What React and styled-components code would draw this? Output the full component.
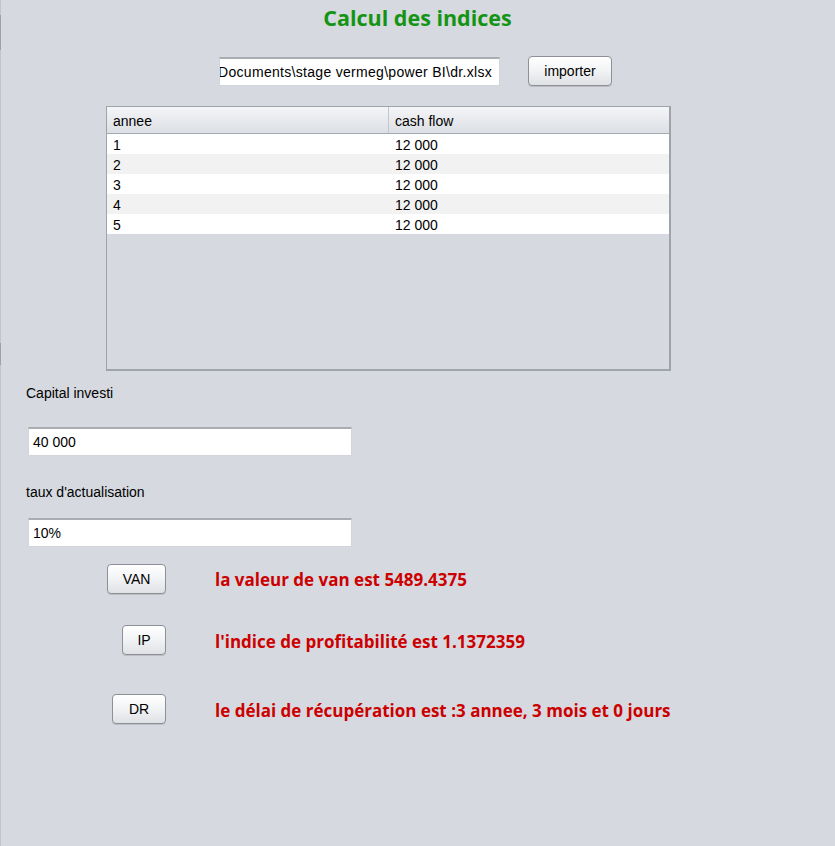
import React from "react";
import styled, { createGlobalStyle } from "styled-components";

const Global = createGlobalStyle`
  html, body { margin: 0; padding: 0; background: #d6d9df; }
  body { font-family: "Liberation Sans", Arial, sans-serif; font-size: 14px; color: #000; }
`;

const Page = styled.div`
  position: relative;
  width: 835px;
  min-height: 846px;
  box-sizing: border-box;
  background: #d6d9df;
  display: flex;
  flex-direction: column;
  &::before, &::after {
    content: "";
    position: absolute;
    left: 0;
    width: 1px;
  }
  &::before { top: 0; bottom: 0; background: #c2c5cb; }
  &::after { top: 15px; height: 35px; background: #9ea1a7; }
`;

const EdgeMark = styled.div`
  position: absolute;
  left: 0;
  top: 343px;
  width: 1px;
  height: 22px;
  background: #9ea1a7;
`;

const Title = styled.h1`
  margin: 4px 0 0 0;
  text-align: center;
  font-family: "Open Sans", "Noto Sans", sans-serif;
  font-weight: 700;
  font-size: 21.5px;
  line-height: 28px;
  color: #149414;
`;

const ImportRow = styled.div`
  display: flex;
  align-items: center;
  gap: 28px;
  margin: 24px 0 0 219px;
`;

const TextField = styled.div`
  box-sizing: border-box;
  width: ${(p) => p.$w}px;
  height: 29px;
  background: #fff;
  border: 1px solid #d2d5da;
  border-top: 2px solid #a9acb1;
  display: flex;
  align-items: center;
  justify-content: ${(p) => (p.$end ? "flex-end" : "flex-start")};
  padding: 0 ${(p) => (p.$end ? 7 : 4)}px 0 4px;
  overflow: hidden;
  white-space: nowrap;
  font-size: 14px;
  letter-spacing: ${(p) => (p.$end ? "0.3px" : "normal")};
`;

const Button = styled.button`
  box-sizing: border-box;
  width: ${(p) => p.$w}px;
  height: 30px;
  border: 1px solid #8d9197;
  border-radius: 4px;
  background: linear-gradient(#ffffff 0%, #f3f4f6 45%, #dfe1e5 100%);
  box-shadow: 0 1px 0 rgba(0,0,0,0.12);
  font-family: "Liberation Sans", Arial, sans-serif;
  font-size: 14px;
  color: #000;
  padding: 0;
  cursor: pointer;
`;

const Table = styled.div`
  box-sizing: border-box;
  margin: 20px 0 0 106px;
  width: 565px;
  height: 265px;
  border: 1px solid #9fa3aa;
  border-right-width: 2px;
  border-bottom-width: 2px;
  display: flex;
  flex-direction: column;
`;

const HeaderRow = styled.div`
  display: grid;
  grid-template-columns: 281px 1fr;
  height: 26px;
  background: linear-gradient(#f4f5f7, #dcdfe4);
  border-bottom: 1px solid #a6aab1;
`;

const HeaderCell = styled.div`
  display: flex;
  align-items: center;
  padding: 2px 0 0 6px;
  font-size: 14px;
  border-left: ${(p) => (p.$sep ? "1px solid #c3c6cc" : "none")};
`;

const Row = styled.div`
  display: grid;
  grid-template-columns: 281px 1fr;
  height: 20px;
  background: ${(p) => (p.$alt ? "#f2f2f2" : "#ffffff")};
`;

const Cell = styled.div`
  display: flex;
  align-items: center;
  padding: 2px 0 0 ${(p) => (p.$second ? 7 : 6)}px;
  font-size: 14px;
`;

const Form = styled.div`
  display: flex;
  flex-direction: column;
  padding-left: 26px;
`;

const Label = styled.div`
  font-size: 14px;
  line-height: 16px;
  margin-top: ${(p) => p.$mt}px;
`;

const FieldWrap = styled.div`
  margin: ${(p) => p.$mt}px 0 0 2px;
`;

const Actions = styled.div`
  display: flex;
  flex-direction: column;
  margin-top: 17px;
`;

const ActionRow = styled.div`
  display: grid;
  grid-template-columns: 166px 1fr;
  column-gap: 49px;
  align-items: center;
  margin-top: ${(p) => p.$mt}px;
`;

const ActionBtn = styled(Button)`
  justify-self: end;
`;

const Result = styled.div`
  font-family: "Open Sans", "Noto Sans", sans-serif;
  font-weight: 700;
  font-size: 17px;
  color: #cc0000;
  padding-top: ${(p) => p.$pt || 0}px;
`;

const rows = [1, 2, 3, 4, 5];

export default function App() {
  return (
    <>
      <Global />
      <Page>
        <EdgeMark />
        <Title>Calcul des indices</Title>
        <ImportRow>
          <TextField $w={281} $end>
            C:\Users\pc\Documents\stage vermeg\power BI\dr.xlsx
          </TextField>
          <Button $w={84}>importer</Button>
        </ImportRow>
        <Table>
          <HeaderRow>
            <HeaderCell>annee</HeaderCell>
            <HeaderCell $sep>cash flow</HeaderCell>
          </HeaderRow>
          {rows.map((r, i) => (
            <Row key={r} $alt={i % 2 === 1}>
              <Cell>{r}</Cell>
              <Cell $second>12 000</Cell>
            </Row>
          ))}
        </Table>
        <Form>
          <Label $mt={14}>Capital investi</Label>
          <FieldWrap $mt={26}>
            <TextField $w={324}>40 000</TextField>
          </FieldWrap>
          <Label $mt={28}>taux d'actualisation</Label>
          <FieldWrap $mt={18}>
            <TextField $w={324}>10%</TextField>
          </FieldWrap>
        </Form>
        <Actions>
          <ActionRow $mt={0}>
            <ActionBtn $w={59}>VAN</ActionBtn>
            <Result>la valeur de van est 5489.4375</Result>
          </ActionRow>
          <ActionRow $mt={31}>
            <ActionBtn $w={44}>IP</ActionBtn>
            <Result $pt={2}>l'indice de profitabilité est 1.1372359</Result>
          </ActionRow>
          <ActionRow $mt={39}>
            <ActionBtn $w={54}>DR</ActionBtn>
            <Result $pt={2}>le délai de récupération est :3 annee, 3 mois et 0 jours</Result>
          </ActionRow>
        </Actions>
      </Page>
    </>
  );
}
